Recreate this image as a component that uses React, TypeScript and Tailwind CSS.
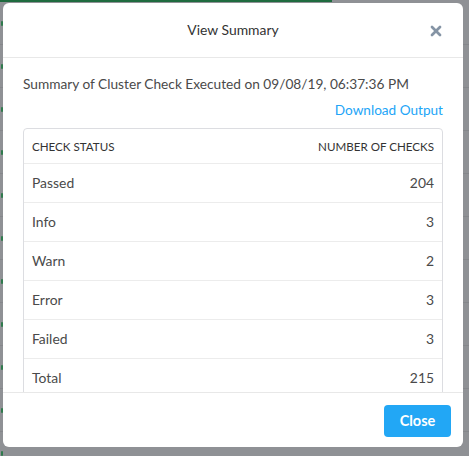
import { X } from 'lucide-react';

const rows = [
  { label: 'Passed', value: 204 },
  { label: 'Info', value: 3 },
  { label: 'Warn', value: 2 },
  { label: 'Error', value: 3 },
  { label: 'Failed', value: 3 },
  { label: 'Total', value: 215 },
];

const bgRows = Array.from({ length: 11 });

export default function App() {
  return (
    <div className="relative h-[456px] w-[469px] overflow-hidden bg-[#8f9195] font-['Lato','Open_Sans',sans-serif]">
      {/* page behind the overlay */}
      <div className="h-[2px] w-[332px] bg-[#1f6b3f]" />
      <div className="flex flex-col">
        {bgRows.map((_, i) => (
          <div key={i} className="flex h-[43px] items-center border-b border-[#85878b]">
            <span className="ml-[1px] h-[5px] w-[2px] rounded-full bg-[#2f7a4d]" />
          </div>
        ))}
      </div>

      {/* dialog */}
      <div className="absolute left-[3px] top-[3px] flex h-[444px] w-[460px] flex-col overflow-hidden rounded-[6px] bg-white">
        <div className="relative flex h-[55px] shrink-0 items-center justify-center border-b border-[#e8e8e8]">
          <h2 className="text-[13.9px] text-[#333]">View Summary</h2>
          <button type="button" className="absolute right-[19px] top-[20px] text-[#8594a5]">
            <X className="h-[16px] w-[16px]" strokeWidth={4} />
          </button>
        </div>

        <div className="flex-1 overflow-hidden px-[20px] pt-[17px]">
          <p className="text-[13.7px] leading-[17px] text-[#4a4a4a]">
            Summary of Cluster Check Executed on 09/08/19, 06:37:36 PM
          </p>
          <div className="mt-[10px] flex justify-end">
            <a className="text-[13.6px] leading-[17px] text-[#22a5f7]">Download Output</a>
          </div>
          <div className="mt-[9px] rounded-[4px] border border-[#dcdde1]">
            <div className="flex h-[35px] items-center justify-between border-b border-[#ececec] px-[8px] pt-[2px] text-[11.6px] uppercase text-[#333]">
              <span>Check Status</span>
              <span>Number of Checks</span>
            </div>
            {rows.map((r) => (
              <div
                key={r.label}
                className="flex h-[39px] items-center justify-between border-b border-[#ececec] px-[8px] pt-[1px] text-[13.9px] text-[#4a4a4a]"
              >
                <span>{r.label}</span>
                <span>{r.value}</span>
              </div>
            ))}
          </div>
        </div>

        <div className="flex h-[55px] shrink-0 items-start justify-end border-t border-[#e8e8e8] px-[12px] pt-[12px]">
          <button
            type="button"
            className="h-[32px] w-[67px] rounded-[4px] bg-[#22a7f5] text-[14.5px] font-bold text-white"
          >
            Close
          </button>
        </div>
      </div>
    </div>
  );
}
